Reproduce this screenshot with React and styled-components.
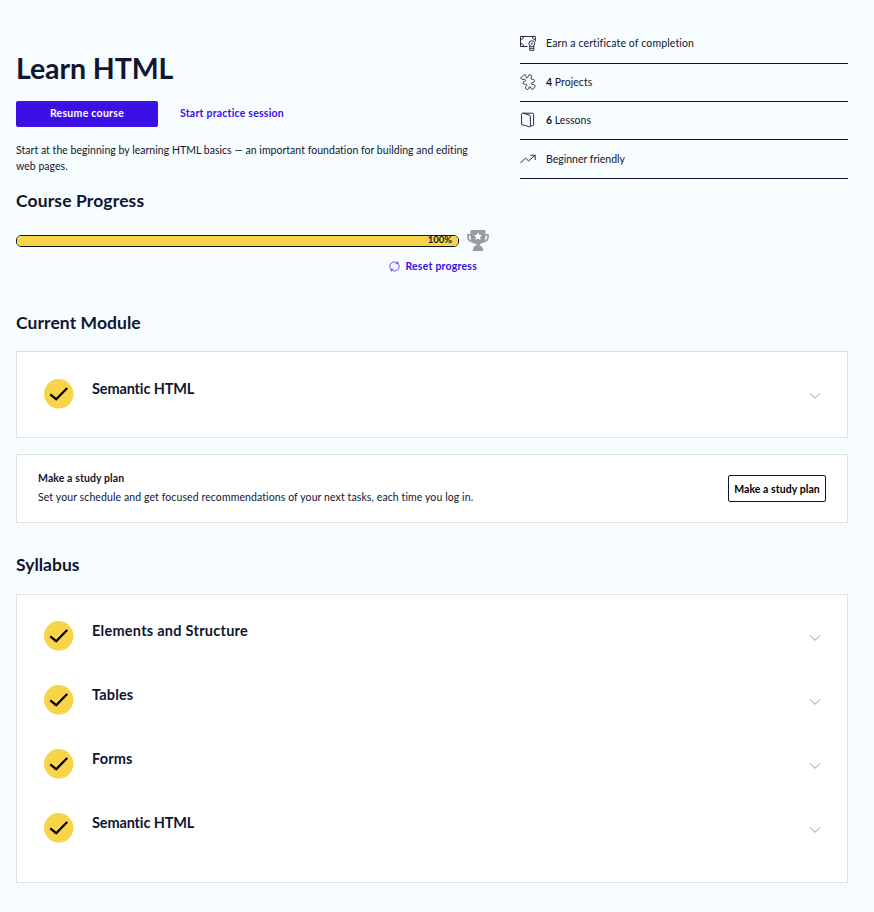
import React from 'react';
import styled, { createGlobalStyle } from 'styled-components';

const navy = '#10162f';
const violet = '#3a10e5';
const yellow = '#f8d448';

const GlobalStyle = createGlobalStyle`
  * { box-sizing: border-box; }
  body {
    margin: 0;
    background: #f7fcff;
    color: ${navy};
    font-family: Lato, "Open Sans", sans-serif;
    font-size: 10.5px;
    font-variant-ligatures: none;
  }
  h1, h2, h3, p, ul { margin: 0; padding: 0; }
  button { font-family: inherit; cursor: pointer; }
`;

const Page = styled.main`
  height: 912px;
  padding: 25px 26px 0 16px;
`;

const Header = styled.header`
  display: grid;
  grid-template-columns: 473px 328px;
  column-gap: 31px;
  height: 286px;
`;

const Intro = styled.section`
  padding-top: 23px;
`;

const Title = styled.h1`
  height: 40px;
  font-size: 28.5px;
  line-height: 40px;
  font-weight: 700;
  letter-spacing: -0.1px;
`;

const Actions = styled.div`
  display: flex;
  gap: 22px;
  height: 26px;
  margin-top: 13px;
`;

const PrimaryButton = styled.button`
  width: 142px;
  height: 26px;
  padding: 0 0 2px;
  border: 0;
  border-radius: 2px;
  background: ${violet};
  color: #fff;
  font-size: 10.5px;
  font-weight: 700;
  letter-spacing: 0.28px;
`;

const TextButton = styled.button`
  display: flex;
  align-items: center;
  gap: 5px;
  padding: 0 0 ${(p) => p.$lift || 0}px;
  border: 0;
  background: none;
  color: ${violet};
  font-size: 10.5px;
  font-weight: 700;
  letter-spacing: 0.22px;
  white-space: nowrap;
`;

const Description = styled.p`
  margin-top: 15px;
  height: 32px;
  line-height: 16px;
  letter-spacing: 0.03px;
  white-space: nowrap;
`;

const SectionTitle = styled.h2`
  height: 24px;
  font-size: 17.5px;
  line-height: 24px;
  font-weight: 700;
  letter-spacing: ${(p) => p.$tracking || 0}px;
`;

const CourseProgress = styled.div`
  margin-top: 15px;
`;

const ProgressRow = styled.div`
  display: flex;
  align-items: center;
  gap: 8px;
  height: 24px;
  margin-top: 16px;
  svg { flex: none; margin-bottom: 3px; }
`;

const ProgressBar = styled.div`
  width: 443px;
  height: 12px;
  border: 1px solid ${navy};
  border-radius: 5px;
  overflow: hidden;
`;

const ProgressFill = styled.div`
  height: 100%;
  padding-right: 6px;
  background: ${yellow};
  font-size: 9.5px;
  font-weight: 700;
  line-height: 8px;
  text-align: right;
`;

const ResetRow = styled.div`
  display: flex;
  justify-content: flex-end;
  margin: 7px 12px 0 0;
`;

const Facts = styled.ul`
  padding-top: 0.7px;
  list-style: none;
`;

const Fact = styled.li`
  display: flex;
  align-items: center;
  gap: 10px;
  height: 38.25px;
  padding-bottom: ${(p) => p.$lift}px;
  border-bottom: 1px solid ${navy};
  letter-spacing: ${(p) => p.$tracking}px;
  svg { flex: none; }
`;

const Card = styled.section`
  height: ${(p) => p.$height}px;
  margin-top: ${(p) => p.$gap}px;
  padding-top: ${(p) => p.$inset || 0}px;
  background: #fff;
  border: 1px solid #dde1e4;
`;

const ModuleRow = styled.div`
  display: flex;
  align-items: flex-start;
  height: 64px;
  padding: 0 26px 0 27px;
`;

const ModuleTitle = styled.h3`
  flex: 1;
  margin-left: 18px;
  font-size: 14.5px;
  line-height: 20px;
  font-weight: 700;
  letter-spacing: ${(p) => p.$tracking || 0}px;
`;

const ChevronIcon = styled.svg`
  margin-top: 13px;
`;

const PlanCard = styled(Card)`
  display: flex;
  align-items: center;
  justify-content: space-between;
  padding: 0 21px;
`;

const PlanCopy = styled.div`
  padding-bottom: 1px;
`;

const PlanText = styled.p`
  line-height: 19px;
  letter-spacing: 0.1px;
`;

const OutlineButton = styled.button`
  width: 98px;
  height: 27px;
  padding: 0;
  border: 1px solid ${navy};
  border-radius: 2px;
  background: #fff;
  color: #000;
  font-size: 10.5px;
  font-weight: 700;
  letter-spacing: 0.06px;
  white-space: nowrap;
`;

const SyllabusSection = styled.section`
  margin-top: 30px;
`;

const iconProps = { width: 16, height: 16, viewBox: '0 0 16 16', fill: 'none', stroke: navy, strokeWidth: 0.9 };

const CertificateIcon = () => (
  <svg {...iconProps}>
    <path d="M7.5 11.5H.5V1.5h14.800v5M.5 4.600A3.200 3.200 0 0 0 3.600 1.500M.5 8.400a3.200 3.200 0 0 1 3.100 3.100M12.200 1.500a3.200 3.200 0 0 0 3.100 3.100" />
    <circle cx="11.800" cy="8.600" r="2.900" />
    <circle cx="11.800" cy="8.600" r=".6" />
    <path d="M9.800 11v4.400h4V11M9.800 13.300h4" />
  </svg>
);

const PuzzleIcon = () => (
  <svg {...iconProps} strokeLinejoin="round">
    <path d="M3.600 1.300C4.800.3 6.200 1 6 2.400c-.1 1 .5 1.700 1.400 1.400C8.500 3.400 7.900 1.700 9 1c1.100-.6 2.700.1 2.700 1.400 0 1-.9 1.300-.7 2.200.3 1 1.500.6 2.400.8 1.300.4 1.500 2 .5 2.800-.8.500-1.700.1-2.300.7-.5.7 0 1.400.9 1.500 1.700 0 2.700.8 2.600 1.900-.1 1-1.200 1.100-1.300 2-.1 1-1.500 1.400-2.300.8-.9-.6-.5-1.700-1.300-2.200-.8-.4-1.500.3-1.400 1.100.1.900-.6 1.500-1.600 1.400-1.400-.2-2.100-1.500-1.400-2.600.5-.8 1.300-1.200 1-2-.4-.9-1.400-.4-2.300-.5C3 10.200 2.500 8.700 3.400 7.800c.7-.6 1.600-.3 2-1 .4-.8-.2-1.400-1.100-1.400-1.300.200-3.100.1-3.400-1.200-.2-1 .9-1.200 1.300-1.700Z" />
  </svg>
);

const LessonsIcon = () => (
  <svg {...iconProps}>
    <path d="M4 13.1H2.7c-.7 0-1.1-.3-1.1-1V2.2c0-.6.4-1 1-1h9.8c.8 0 1.2.4 1.2 1.1v10.5c0 .7-.4 1-1 1h-1.7M3.3 1.2l5.9 1.9c.8.3 1.2.7 1.2 1.5v9.700c0 .6-.4.8-1 .6L4 13.1" />
  </svg>
);

const TrendIcon = () => (
  <svg {...iconProps}>
    <path d="m.5 12.1 4.8-5 3.300 2.800 6.400-5.500M10.400 4.200h4.800V9" />
  </svg>
);

const ResetIcon = () => (
  <svg width="11" height="11" viewBox="0 0 11 11" fill="none" stroke={violet} strokeWidth=".7">
    <path d="M2.500 9A4.500 4.500 0 0 1 4.800 1c1.500-.2 2.600.2 3.700 1.300M8.800.4v2.300H6.500M8.500 2A4.500 4.500 0 0 1 6.200 10c-1.500.2-2.600-.2-3.700-1.300M2.200 10.600V8.300h2.300" />
  </svg>
);

const TrophyIcon = () => (
  <svg width="22" height="22" viewBox="0 0 22 22">
    <path d="M4.500 5.800H1v2.300c0 2.700 2.100 4.500 5 4.700M17.500 5.800H21v2.300c0 2.700-2.100 4.500-5 4.700" fill="none" stroke="#9b9b9b" strokeWidth="1.700" />
    <path d="M3.600 1h14.800v7.600c0 3.800-2.100 5.800-5.600 6.500v1.500c2.300.3 3.200 2.400 3.500 5.400H5.700c.3-3 1.200-5.100 3.500-5.400v-1.500c-3.500-.7-5.600-2.700-5.600-6.500Z" fill="#9b9b9b" />
    <path d="m11 3.300 1.200 2.500 2.800.4-2 1.900.5 2.800-2.500-1.300-2.500 1.300.5-2.800-2-1.900 2.800-.4Z" fill="#fff" />
  </svg>
);

const CheckBadge = () => (
  <svg width="30" height="30" viewBox="0 0 30 30">
    <circle cx="14.7" cy="14.8" r="14.7" fill={yellow} />
    <path d="m6.2 15.3 6 4.900L23.200 9" fill="none" stroke="#000" strokeWidth="2.3" />
  </svg>
);

const Module = ({ title, tracking }) => (
  <ModuleRow>
    <CheckBadge />
    <ModuleTitle $tracking={tracking}>{title}</ModuleTitle>
    <ChevronIcon width="12" height="8" viewBox="0 0 12 8" fill="none" stroke="#9698a5">
      <path d="m1 1.300 5 5 5-5" />
    </ChevronIcon>
  </ModuleRow>
);

const facts = [
  { Icon: CertificateIcon, text: 'Earn a certificate of completion', tracking: 0.13, lift: 2.5 },
  { Icon: PuzzleIcon, count: 4, text: 'Projects', tracking: 0.05, lift: 2 },
  { Icon: LessonsIcon, count: 6, text: 'Lessons', tracking: 0.05, lift: 1 },
  { Icon: TrendIcon, text: 'Beginner friendly', tracking: 0, lift: 1 },
];

const syllabus = [
  { title: 'Elements and Structure', tracking: 0.26 },
  { title: 'Tables', tracking: 0.15 },
  { title: 'Forms', tracking: 0.16 },
  { title: 'Semantic HTML', tracking: -0.13 },
];

export default function App() {
  const progress = 100;
  return (
    <>
      <GlobalStyle />
      <Page>
        <Header>
          <Intro>
            <Title>Learn HTML</Title>
            <Actions>
              <PrimaryButton>Resume course</PrimaryButton>
              <TextButton $lift={2}>Start practice session</TextButton>
            </Actions>
            <Description>
              Start at the beginning by learning HTML basics — an important foundation for building and editing
              <br />
              web pages.
            </Description>
            <CourseProgress>
              <SectionTitle $tracking={0.13}>Course Progress</SectionTitle>
              <ProgressRow>
                <ProgressBar>
                  <ProgressFill style={{ width: `${progress}%` }}>{progress}%</ProgressFill>
                </ProgressBar>
                <TrophyIcon />
              </ProgressRow>
              <ResetRow>
                <TextButton>
                  <ResetIcon />
                  Reset progress
                </TextButton>
              </ResetRow>
            </CourseProgress>
          </Intro>
          <Facts>
            {facts.map(({ Icon, count, text, tracking, lift }) => (
              <Fact key={text} $tracking={tracking} $lift={lift}>
                <Icon />
                <span>
                  {count && <b>{count} </b>}
                  {text}
                </span>
              </Fact>
            ))}
          </Facts>
        </Header>

        <SectionTitle $tracking={0.07}>Current Module</SectionTitle>
        <Card $height={87} $gap={16} $inset={27}>
          <Module {...syllabus[3]} />
        </Card>
        <PlanCard $height={69} $gap={16}>
          <PlanCopy>
            <PlanText>
              <b>Make a study plan</b>
            </PlanText>
            <PlanText>
              Set your schedule and get focused recommendations of your next tasks, each time you log in.
            </PlanText>
          </PlanCopy>
          <OutlineButton>Make a study plan</OutlineButton>
        </PlanCard>

        <SyllabusSection>
          <SectionTitle>Syllabus</SectionTitle>
          <Card $height={289} $gap={17} $inset={26}>
            {syllabus.map((module) => (
              <Module key={module.title} {...module} />
            ))}
          </Card>
        </SyllabusSection>
      </Page>
    </>
  );
}
